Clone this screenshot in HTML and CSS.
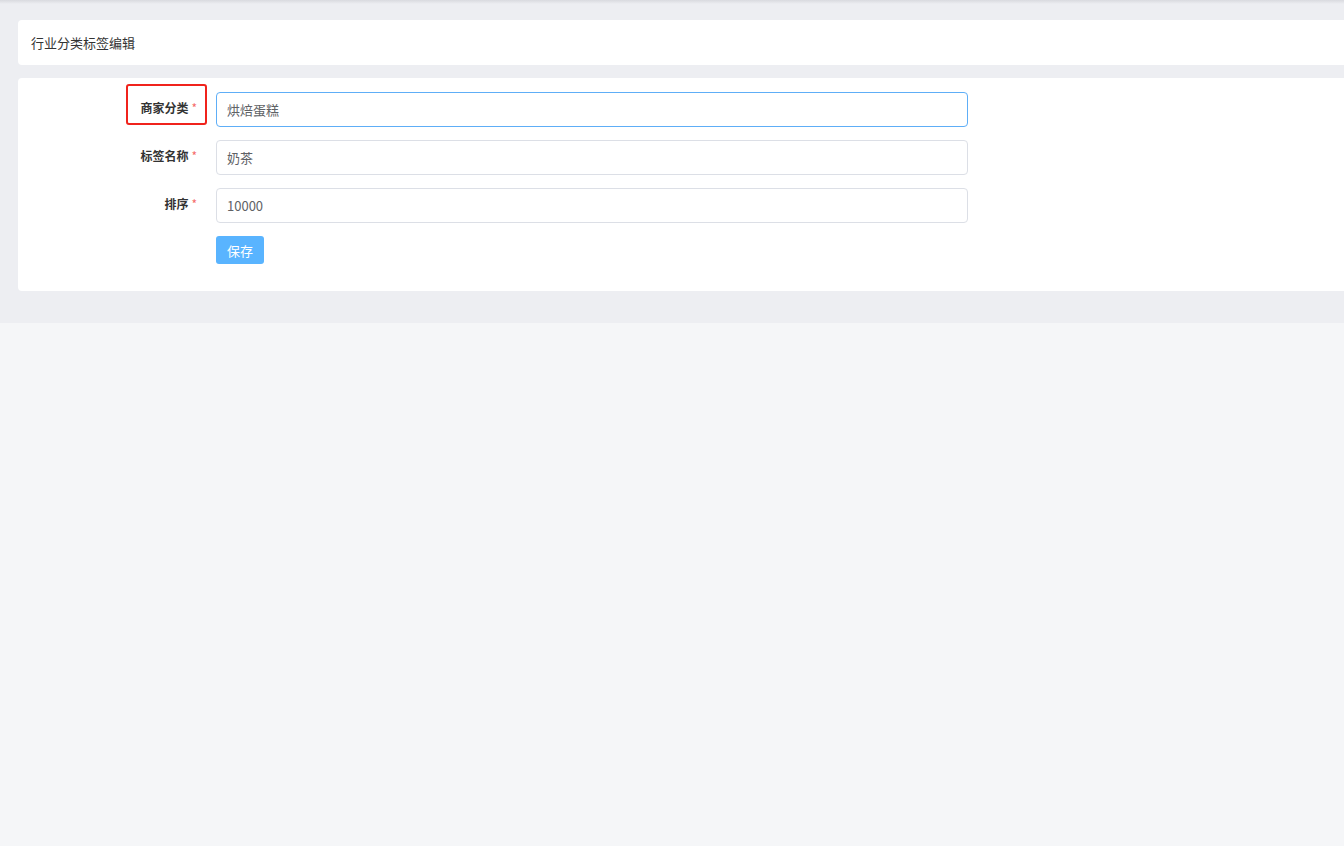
FILE: index.html
```html
<!DOCTYPE html>
<html>
<head>
	<title>行业分类标签编辑</title>
	<link rel="stylesheet" href="styles.css">
</head>
<body>
	<div class="topbar"></div>
	<div class="main">
		<div class="card head">行业分类标签编辑</div>
		<form class="card form" action="" method="POST">
			<div class="row">
				<label for="cate" class="marked">商家分类<span class="star">*</span></label>
				<input type="text" id="cate" class="text focus" value="烘焙蛋糕"/>
			</div>
			<div class="row">
				<label for="name">标签名称<span class="star">*</span></label>
				<input type="text" id="name" class="text" value="奶茶"/>
			</div>
			<div class="row">
				<label for="sort">排序<span class="star">*</span></label>
				<input type="text" id="sort" class="text" value="10000"/>
			</div>
			<div class="row">
				<span class="blank"></span>
				<button type="button" class="submit">保存</button>
			</div>
		</form>
	</div>
</body>
</html>
```

FILE: styles.css
```css
html, body {
	margin: 0;
	padding: 0;
	height: 100%;
	background: #f5f6f8;
	overflow: hidden;
	font-family: "Noto Sans CJK SC", "Liberation Sans", sans-serif;
}
.topbar {
	height: 4px;
	background: linear-gradient(#d9dadf, #edeef2);
}
.main {
	background: #edeef2;
	padding: 16px 0 32px 18px;
	width: 1360px;
}
.card {
	background: #fff;
	border-radius: 4px;
}
.head {
	height: 45px;
	line-height: 45px;
	padding-left: 13px;
	font-size: 13px;
	color: #333;
	margin-bottom: 13px;
}
.form {
	padding: 14px 0 27px 0;
}
.row {
	display: flex;
	align-items: center;
	margin-bottom: 13px;
}
.row:last-child { margin-bottom: 0; }
label, .blank {
	width: 179px;
	text-align: right;
	padding-right: 19px;
	font-size: 12px;
	font-weight: bold;
	color: #333;
	position: relative;
	top: -2px;
	box-sizing: content-box;
}
label.marked::after {
	content: "";
	position: absolute;
	left: 108px;
	top: -15px;
	width: 77px;
	height: 37px;
	border: 2px solid #f0231c;
	border-radius: 3px;
}
.star {
	color: #f56c6c;
	font-weight: normal;
	margin-left: 3px;
}
input.text {
	width: 752px;
	height: 35px;
	box-sizing: border-box;
	border: 1px solid #dcdfe6;
	border-radius: 4px;
	padding: 0 10px;
	font-family: "Noto Sans CJK SC", "Liberation Sans", sans-serif;
	font-size: 13px;
	color: #606266;
	outline: none;
}
input.focus { border-color: #5eaef7; }
.submit {
	width: 48px;
	height: 28px;
	border: none;
	border-radius: 3px;
	background: #59b4ff;
	color: #fff;
	font-family: "Noto Sans CJK SC", "Liberation Sans", sans-serif;
	font-size: 13px;
	padding: 0;
}
```
